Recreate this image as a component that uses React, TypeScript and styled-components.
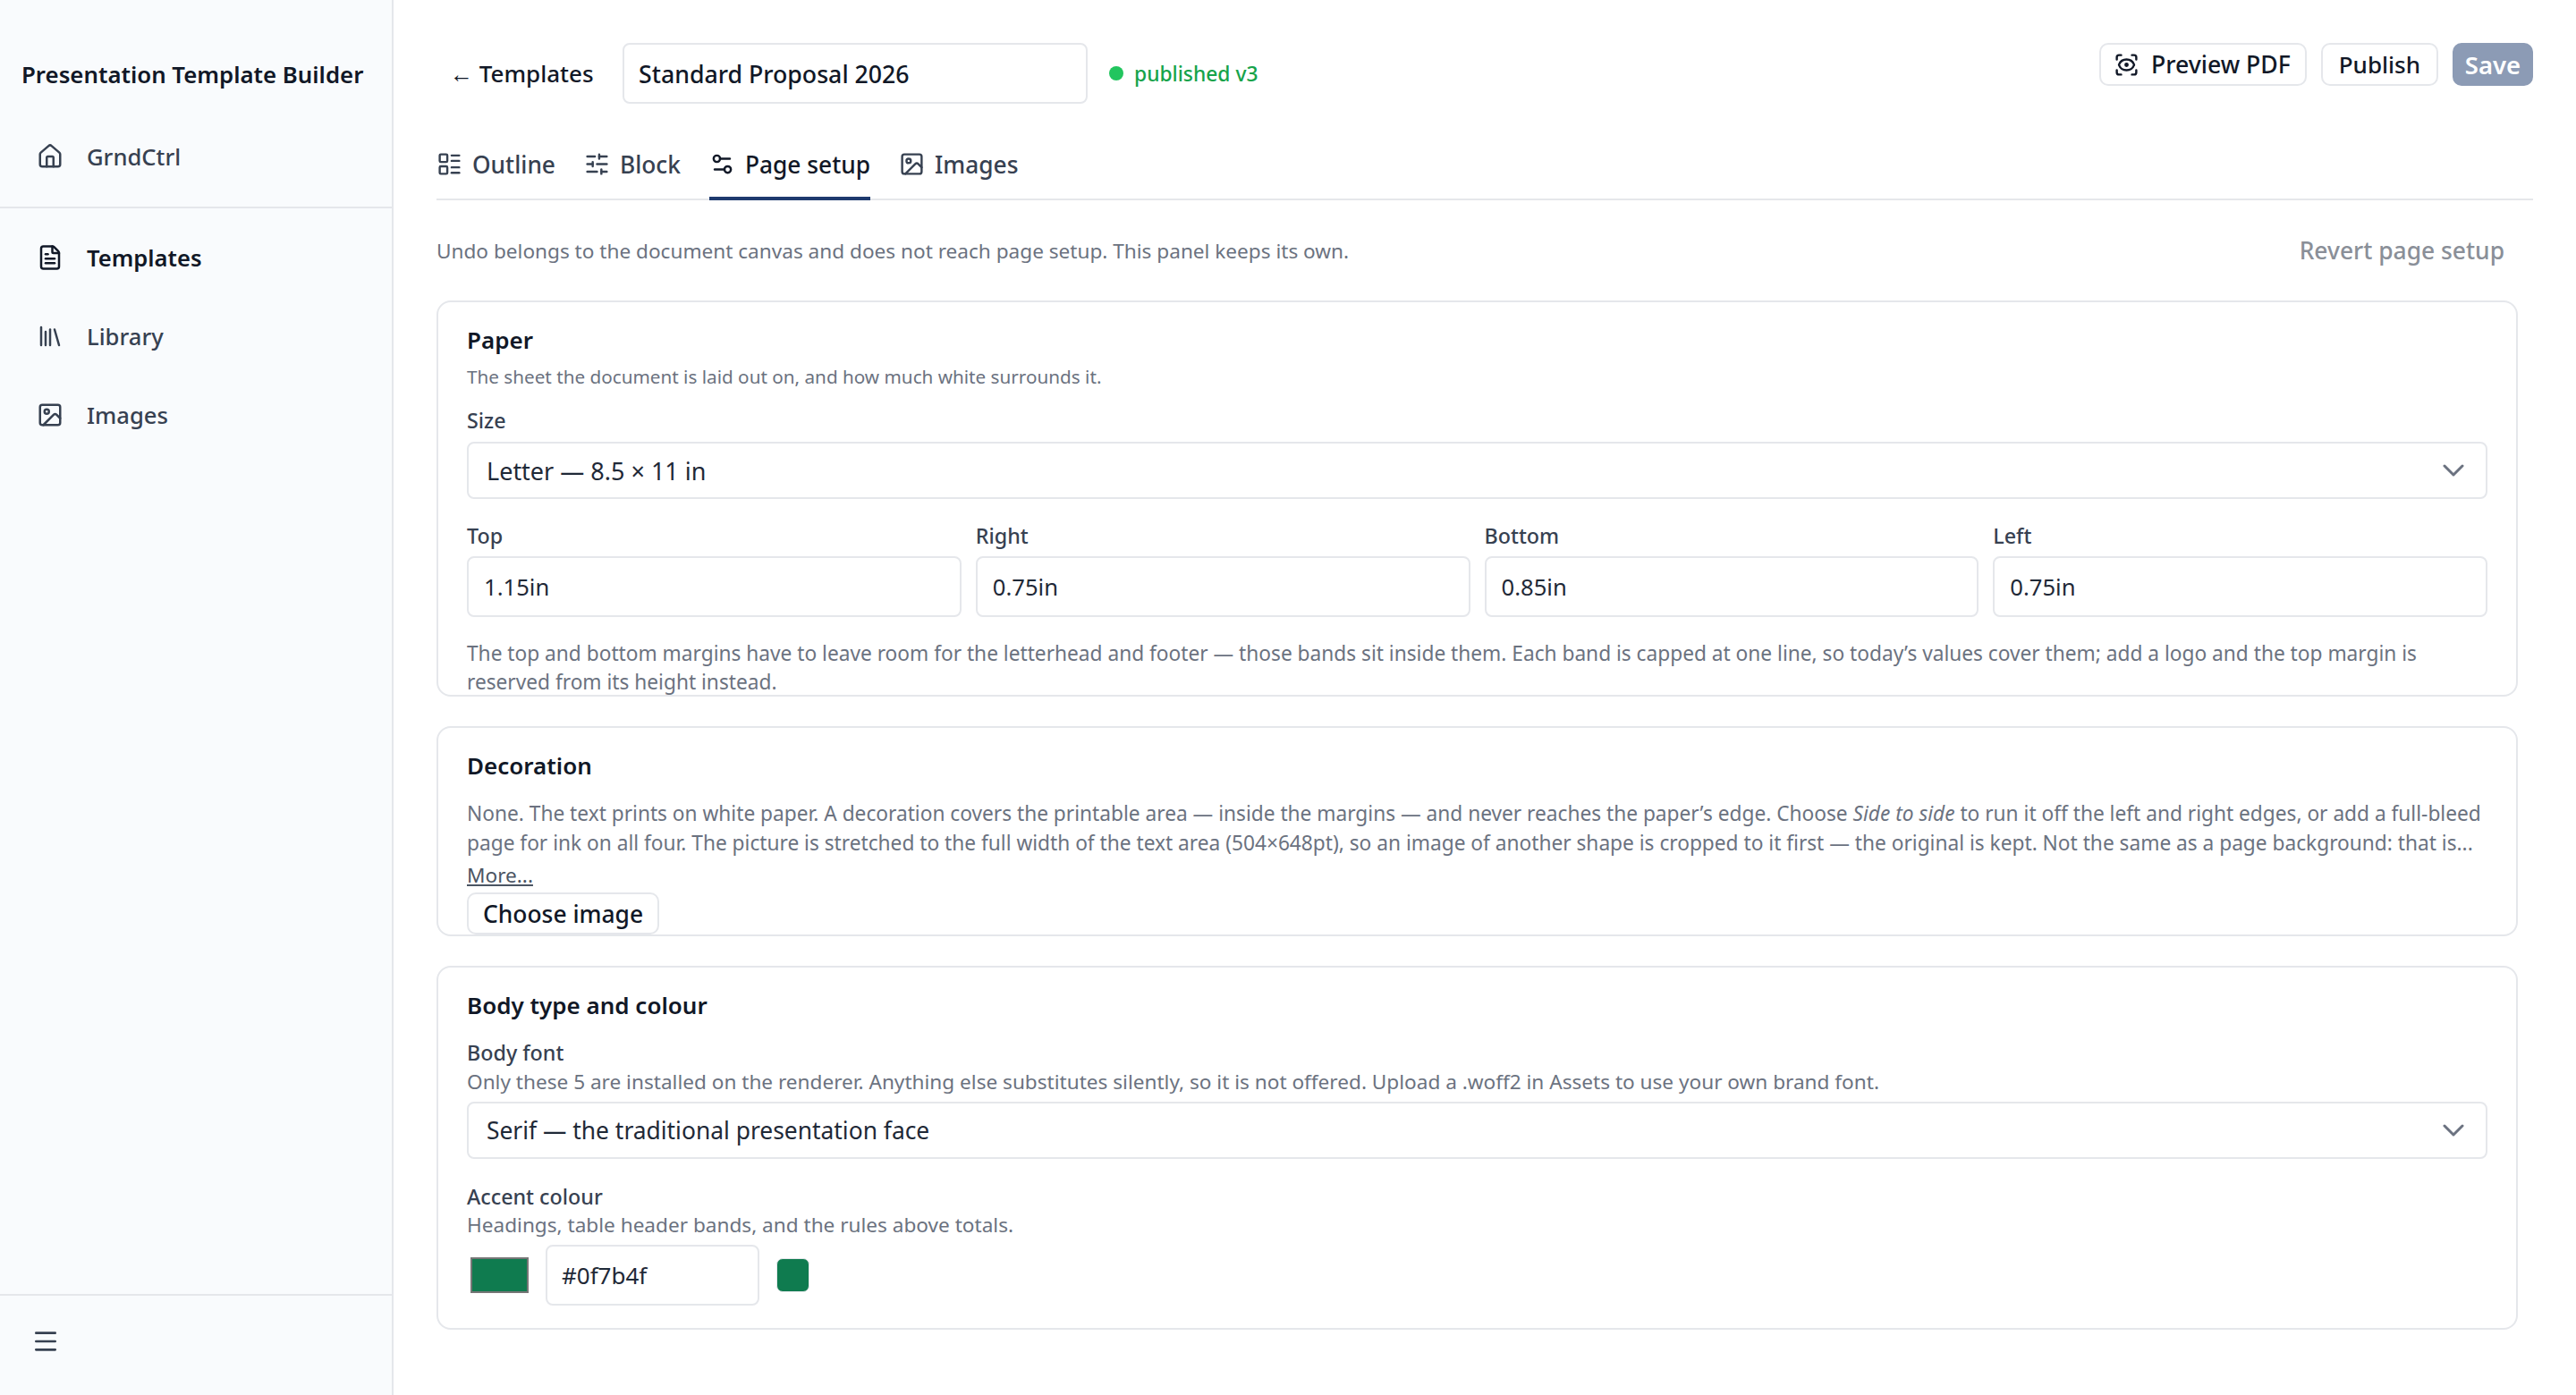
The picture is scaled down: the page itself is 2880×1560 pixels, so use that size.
import React from 'react';
import styled, { createGlobalStyle } from 'styled-components';
import {
  FileText,
  House,
  Image,
  LayoutList,
  Library,
  Menu,
  ScanEye,
  Settings2,
  SlidersHorizontal,
} from 'lucide-react';

const GlobalStyle = createGlobalStyle`
  html, body { margin: 0; padding: 0; background: #fff; }
  body { font-family: "Noto Sans", "Open Sans", sans-serif; color: #1f2937; }
  * { box-sizing: border-box; }
`;

const Shell = styled.div`
  display: flex;
  height: 100vh;
  overflow: hidden;
`;

const Sidebar = styled.aside`
  width: 440px;
  flex: none;
  display: flex;
  flex-direction: column;
  background: #f9fbfd;
  border-right: 2px solid #e5e7eb;
`;

const Brand = styled.div`
  padding: 64px 0 0 24px;
  font-size: 25.8px;
  line-height: 38px;
  font-weight: 600;
  color: #111827;
`;

const NavGroup = styled.nav`
  display: flex;
  flex-direction: column;
  gap: ${(p: { $gap?: number }) => p.$gap || 0}px;
`;

const TopNav = styled(NavGroup)`
  height: 131px;
  padding-top: 51px;
  border-bottom: 2px solid #e5e7eb;
`;

const MainNav = styled(NavGroup)`
  padding-top: 33px;
  flex: 1;
`;

const NavItem = styled.a<{ $active?: boolean }>`
  display: flex;
  align-items: center;
  gap: 26px;
  height: 44px;
  padding-left: 41px;
  font-size: 25.6px;
  font-weight: ${(p) => (p.$active ? 600 : 500)};
  color: ${(p) => (p.$active ? '#111827' : '#374151')};
`;

const SideFoot = styled.div`
  height: 113px;
  border-top: 2px solid #e5e7eb;
  display: flex;
  align-items: center;
  padding: 0 0 9px 35px;
  color: #374151;
`;

const Main = styled.main`
  flex: 1;
  min-width: 0;
  padding: 48px 48px 0 48px;
`;

const TopBar = styled.header`
  display: flex;
  justify-content: space-between;
  align-items: flex-start;
`;

const TitleGroup = styled.div`
  display: flex;
  align-items: center;
  gap: 24px;
  padding-left: 15px;
`;

const BackLink = styled.a`
  width: 169px;
  flex: none;
  font-size: 26px;
  font-weight: 500;
  color: #111827;
  white-space: nowrap;
`;

const TitleInput = styled.div`
  width: 520px;
  height: 68px;
  display: flex;
  align-items: center;
  padding: 0 16px;
  border: 2px solid #e5e7eb;
  border-radius: 8px;
  font-size: 26.7px;
  font-weight: 500;
  color: #111827;
`;

const Status = styled.span`
  display: flex;
  align-items: center;
  gap: 12px;
  font-size: 22.8px;
  font-weight: 500;
  color: #16a34a;
`;

const Dot = styled.i`
  width: 16px;
  height: 16px;
  border-radius: 50%;
  background: #22c55e;
`;

const Actions = styled.div`
  display: flex;
  gap: 16px;
`;

const Button = styled.button`
  height: 48px;
  display: flex;
  align-items: center;
  padding: 0 18px;
  background: #fff;
  border: 2px solid #e5e7eb;
  border-radius: 10px;
  font: 500 26px "Noto Sans", sans-serif;
  color: #111827;
  white-space: nowrap;
`;

const PreviewButton = styled(Button)`
  gap: 13px;
  padding: 0 16px 0 14px;
  font-size: 26.6px;
`;

const SaveButton = styled(Button)`
  width: 90px;
  justify-content: center;
  padding: 0;
  background: #8c9bb5;
  border-color: #8c9bb5;
  color: #fff;
  font-size: 27.5px;
  font-weight: 600;
`;

const ChooseButton = styled(Button)`
  height: 47px;
  padding: 0 16px;
  font-size: 26.4px;
`;

const Tabs = styled.div`
  display: flex;
  gap: 32px;
  height: 109px;
  margin-top: -1px;
  padding-top: 36px;
  border-bottom: 2px solid #e5e7eb;
`;

const Tab = styled.a<{ $active?: boolean }>`
  display: flex;
  align-items: center;
  gap: 11px;
  height: 73px;
  padding-bottom: 4px;
  margin-bottom: -2px;
  font-size: 26.3px;
  font-weight: 500;
  color: ${(p) => (p.$active ? '#111827' : '#374151')};
  border-bottom: 4px solid ${(p) => (p.$active ? '#1e3a6e' : 'transparent')};
`;

const Intro = styled.div`
  display: flex;
  justify-content: space-between;
  align-items: center;
  height: 112px;
  padding-right: 32px;
  font-size: 22.6px;
  color: #6b7280;
`;

const Revert = styled.span`
  font-size: 26.4px;
  font-weight: 500;
  color: #8a8f98;
`;

const Cards = styled.div`
  display: flex;
  flex-direction: column;
  gap: 33px;
  margin-right: 17px;
`;

const Card = styled.section<{ $height: number }>`
  height: ${(p) => p.$height}px;
  padding: 23px 32px 0;
  border: 2px solid #e5e7eb;
  border-radius: 16px;
`;

const CardTitle = styled.h2`
  margin: 0;
  font-size: 26px;
  line-height: 38px;
  font-weight: 600;
  color: #111827;
`;

const Desc = styled.p`
  margin: 0;
  font-size: 22.6px;
  line-height: 32px;
  color: #6b7280;
`;

const PaperDesc = styled(Desc)`
  margin-top: 6px;
  font-size: 20.7px;
`;

const Note = styled(Desc)`
  margin-top: 25px;
  font-size: 22.7px;
`;

const DecorText = styled(Desc)`
  margin-top: 18px;
  font-size: 22.7px;
  line-height: 33px;
`;

const More = styled.a`
  display: block;
  margin-top: 2px;
  margin-bottom: 1px;
  font-size: 22.6px;
  line-height: 36px;
  color: #4b5563;
  text-decoration: underline;
`;

const Label = styled.label`
  display: block;
  font-size: 23.3px;
  line-height: 30px;
  font-weight: 500;
  color: #374151;
`;

const SizeLabel = styled(Label)`
  margin-top: 18px;
  margin-bottom: 9px;
`;

const FontLabel = styled(Label)`
  margin-top: 19px;
  margin-bottom: 2px;
`;

const AccentLabel = styled(Label)`
  margin-top: 27px;
  margin-bottom: 1px;
`;

const Select = styled.div`
  height: 64px;
  display: flex;
  align-items: center;
  justify-content: space-between;
  padding: 0 24px 0 20px;
  border: 2px solid #e5e7eb;
  border-radius: 8px;
  font-size: 26.4px;
  color: #1f2937;
`;

const SizeSelect = styled(Select)`
  font-size: 27px;
`;

const FontSelect = styled(Select)`
  margin-top: 6px;
`;

const Chevron = styled.svg`
  width: 24px;
  height: 14px;
  fill: none;
  stroke: #6b7280;
  stroke-width: 3;
  stroke-linecap: round;
  stroke-linejoin: round;
`;

const MarginGrid = styled.div`
  display: grid;
  grid-template-columns: repeat(4, 1fr);
  gap: 16px;
  margin-top: 26px;
`;

const Input = styled.div`
  height: 68px;
  display: flex;
  align-items: center;
  padding: 0 17px;
  margin-top: 8px;
  border: 2px solid #e5e7eb;
  border-radius: 8px;
  font-size: 25.6px;
  color: #1f2937;
`;

const ColourRow = styled.div`
  display: flex;
  align-items: center;
  margin-top: 6px;
`;

const Swatch = styled.div`
  width: 65px;
  height: 40px;
  margin: 0 19px 0 4px;
  background: #0f7b4f;
  border: 2px solid #767676;
`;

const HexInput = styled(Input)`
  width: 239px;
  margin-top: 0;
  padding: 0 16px;
  font-size: 26px;
`;

const Chip = styled.div`
  width: 37px;
  height: 38px;
  margin-left: 19px;
  background: #0f7b4f;
  border: 1px solid #e5e7eb;
  border-radius: 7px;
`;

const NAV_ICON = 30;
const TAB_ICON = 29;

const DownArrow = () => (
  <Chevron viewBox="0 0 24 14">
    <polyline points="2,2 12,12 22,2" />
  </Chevron>
);

export default function App(): JSX.Element {
  return (
    <Shell>
      <GlobalStyle />
      <Sidebar>
        <Brand>Presentation Template Builder</Brand>
        <TopNav>
          <NavItem>
            <House size={NAV_ICON} />
            GrndCtrl
          </NavItem>
        </TopNav>
        <MainNav $gap={44}>
          <NavItem $active>
            <FileText size={NAV_ICON} />
            Templates
          </NavItem>
          <NavItem>
            <Library size={NAV_ICON} />
            Library
          </NavItem>
          <NavItem>
            <Image size={NAV_ICON} />
            Images
          </NavItem>
        </MainNav>
        <SideFoot>
          <Menu size={32} />
        </SideFoot>
      </Sidebar>
      <Main>
        <TopBar>
          <TitleGroup>
            <BackLink>← Templates</BackLink>
            <TitleInput>Standard Proposal 2026</TitleInput>
            <Status>
              <Dot />
              published v3
            </Status>
          </TitleGroup>
          <Actions>
            <PreviewButton>
              <ScanEye size={29} />
              Preview PDF
            </PreviewButton>
            <Button>Publish</Button>
            <SaveButton>Save</SaveButton>
          </Actions>
        </TopBar>
        <Tabs>
          <Tab>
            <LayoutList size={TAB_ICON} />
            Outline
          </Tab>
          <Tab>
            <SlidersHorizontal size={TAB_ICON} />
            Block
          </Tab>
          <Tab $active>
            <Settings2 size={TAB_ICON} />
            Page setup
          </Tab>
          <Tab>
            <Image size={TAB_ICON} />
            Images
          </Tab>
        </Tabs>
        <Intro>
          <span>Undo belongs to the document canvas and does not reach page setup. This panel keeps its own.</span>
          <Revert>Revert page setup</Revert>
        </Intro>
        <Cards>
          <Card $height={443}>
            <CardTitle>Paper</CardTitle>
            <PaperDesc>The sheet the document is laid out on, and how much white surrounds it.</PaperDesc>
            <SizeLabel>Size</SizeLabel>
            <SizeSelect>
              Letter — 8.5 × 11 in
              <DownArrow />
            </SizeSelect>
            <MarginGrid>
              {[
                ['Top', '1.15in'],
                ['Right', '0.75in'],
                ['Bottom', '0.85in'],
                ['Left', '0.75in'],
              ].map(([name, value]) => (
                <div key={name}>
                  <Label>{name}</Label>
                  <Input>{value}</Input>
                </div>
              ))}
            </MarginGrid>
            <Note>
              The top and bottom margins have to leave room for the letterhead and footer — those bands sit inside
              them. Each band is capped at one line, so today’s values cover them; add a logo and the top margin is
              reserved from its height instead.
            </Note>
          </Card>
          <Card $height={235}>
            <CardTitle>Decoration</CardTitle>
            <DecorText>
              None. The text prints on white paper. A decoration covers the printable area — inside the margins — and
              never reaches the paper’s edge. Choose <em>Side to side</em> to run it off the left and right edges, or
              add a full-bleed page for ink on all four. The picture is stretched to the full width of the text area
              (504×648pt), so an image of another shape is cropped to it first — the original is kept. Not the same as
              a page background: that is...
            </DecorText>
            <More>More...</More>
            <ChooseButton>Choose image</ChooseButton>
          </Card>
          <Card $height={407}>
            <CardTitle>Body type and colour</CardTitle>
            <FontLabel>Body font</FontLabel>
            <Desc>
              Only these 5 are installed on the renderer. Anything else substitutes silently, so it is not offered.
              Upload a .woff2 in Assets to use your own brand font.
            </Desc>
            <FontSelect>
              Serif — the traditional presentation face
              <DownArrow />
            </FontSelect>
            <AccentLabel>Accent colour</AccentLabel>
            <Desc>Headings, table header bands, and the rules above totals.</Desc>
            <ColourRow>
              <Swatch />
              <HexInput>#0f7b4f</HexInput>
              <Chip />
            </ColourRow>
          </Card>
        </Cards>
      </Main>
    </Shell>
  );
}
